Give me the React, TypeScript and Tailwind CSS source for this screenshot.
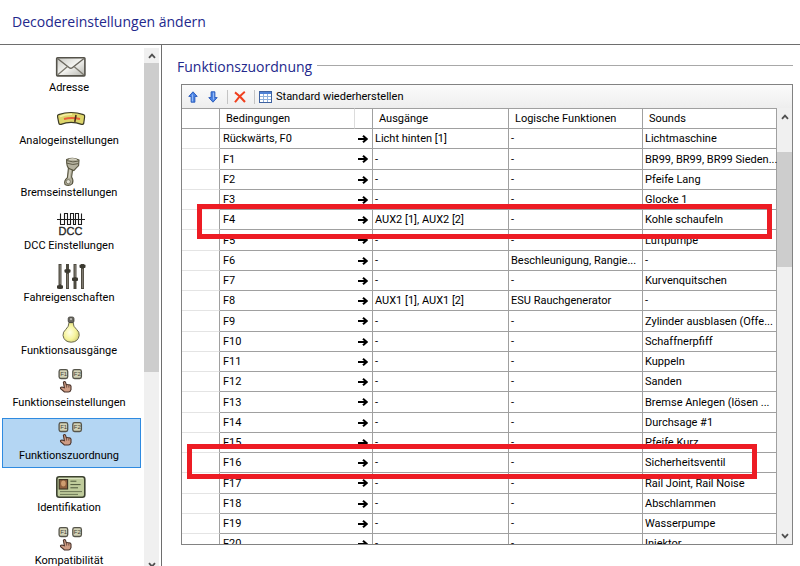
import React from 'react';
import clsx from 'clsx';

interface MappingRow {
  condition: string;
  outputs: string;
  logic: string;
  sounds: string;
}

const row = (condition: string, sounds: string, outputs = '-', logic = '-'): MappingRow => ({
  condition,
  outputs,
  logic,
  sounds,
});

const rows: MappingRow[] = [
  row('Rückwärts, F0', 'Lichtmaschine', 'Licht hinten [1]'),
  row('F1', 'BR99, BR99, BR99 Sieden...'),
  row('F2', 'Pfeife Lang'),
  row('F3', 'Glocke 1'),
  row('F4', 'Kohle schaufeln', 'AUX2 [1], AUX2 [2]'),
  row('F5', 'Luftpumpe'),
  row('F6', '-', '-', 'Beschleunigung, Rangie...'),
  row('F7', 'Kurvenquitschen'),
  row('F8', '-', 'AUX1 [1], AUX1 [2]', 'ESU Rauchgenerator'),
  row('F9', 'Zylinder ausblasen (Offe...'),
  row('F10', 'Schaffnerpfiff'),
  row('F11', 'Kuppeln'),
  row('F12', 'Sanden'),
  row('F13', 'Bremse Anlegen (lösen ...'),
  row('F14', 'Durchsage #1'),
  row('F15', 'Pfeife Kurz'),
  row('F16', 'Sicherheitsventil'),
  row('F17', 'Rail Joint, Rail Noise'),
  row('F18', 'Abschlammen'),
  row('F19', 'Wasserpumpe'),
  row('F20', 'Injektor'),
];

const NavIcon = ({ children }: { children: React.ReactNode }) => (
  <svg viewBox="0 1 34 30" className="h-[30px] w-[34px] shrink-0 overflow-visible" aria-hidden="true">
    {children}
  </svg>
);

const EnvelopeIcon = () => (
  <NavIcon>
    <defs>
      <linearGradient id="paper" x1="0" y1="0" x2="1" y2="1">
        <stop offset="0" stopColor="#c9c9c3" />
        <stop offset="0.5" stopColor="#f4f4f1" />
        <stop offset="1" stopColor="#b4b4ad" />
      </linearGradient>
    </defs>
    <rect x="4.7" y="7.7" width="28.2" height="18.2" rx="0.8" fill="url(#paper)" stroke="#54524a" strokeWidth="1.6" />
    <path d="M5.5 8.5 L17 17.5 Q18.8 19 20.6 17.5 L32 8.5" fill="none" stroke="#6a675e" strokeWidth="1.4" />
    <path d="M5.5 25 L15.5 16.4 M32 25 L22 16.4" stroke="#7d7a70" strokeWidth="1.3" />
  </NavIcon>
);

const GaugeIcon = () => (
  <NavIcon>
    <path
      d="M6.5 11.6 Q19 7.4 31.5 11.6 Q33 12 32.6 14 L31.8 20 Q31.4 21.8 29.6 21.4 Q19 17.4 9 21.4 Q7.2 21.8 6.8 20 L5.6 14 Q5.2 12 6.5 11.6 Z"
      fill="#ddd56a"
      stroke="#3b3a26"
      strokeWidth="1.2"
    />
    <path d="M8 13.4 Q13 11.2 20 11.2" fill="none" stroke="#f4f0a4" strokeWidth="1.6" />
    <path d="M12 16 Q20 14 28 16" fill="none" stroke="#e8603a" strokeWidth="2" />
    <path d="M24 12 L22.8 18.8" stroke="#4c2c1a" strokeWidth="1.6" />
  </NavIcon>
);

const PistonIcon = () => (
  <NavIcon>
    <path
      d="M16.5 12.5 L20.8 13.5 L19.6 22 Q21.8 25 20.4 28.6 Q17 31.6 13 29.4 Q11.6 25.6 15.4 22.6 Z"
      fill="#b3b09e"
      stroke="#57543f"
      strokeWidth="1.1"
    />
    <path d="M18.3 14 L17 23" stroke="#d8d5c3" strokeWidth="1.3" />
    <circle cx="16.3" cy="26.7" r="2.1" fill="#e4e2d5" stroke="#6f6c58" strokeWidth="0.8" />
    <path
      d="M14.6 4.6 Q21 1.6 27 5 L26.6 10.6 Q24 13 21.8 15.6 L17 13.6 Q14.4 11.6 14.6 4.6 Z"
      fill="#b5b29f"
      stroke="#57543f"
      strokeWidth="1.1"
    />
    <path d="M15 5.6 Q21 8 26.6 6 M15 8.2 Q21 10.6 26.4 8.6" fill="none" stroke="#5f5c49" strokeWidth="1" />
    <path d="M17 4.4 Q21 3.2 24.6 4.6" fill="none" stroke="#e0decf" strokeWidth="1.2" />
  </NavIcon>
);

const DccIcon = () => (
  <NavIcon>
    <path
      d="M5 11.5 H33 M8.5 5.5 V16.5 H12.5 V5.5 H15.5 V16.5 H18.5 V5.5 H21.5 V16.5 H23.5 V5.5 H26.5 V16.5 H29.5 V5.5"
      fill="none"
      stroke="#1c1c1c"
      strokeWidth="1.1"
    />
    <text x="6.6" y="27.3" fontSize="11" fill="#222" stroke="#222" strokeWidth="0.3" fontFamily="Liberation Sans, sans-serif">
      DCC
    </text>
  </NavIcon>
);

const SlidersIcon = () => (
  <NavIcon>
    <path d="M8 4 V29 M15.5 4 V29 M23 4 V29 M30.5 4 V29" stroke="#4e4b40" strokeWidth="3" />
    <path d="M8.2 5 V24 M15.7 14 V28 M23.2 5 V17 M30.7 9 V28" stroke="#99968a" strokeWidth="0.8" />
    <g fill="#3b3930">
      <rect x="5" y="25.2" width="6" height="3.6" rx="1" />
      <rect x="12.5" y="9.2" width="6" height="3.6" rx="1" />
      <rect x="20" y="17.4" width="6" height="3.6" rx="1" />
      <rect x="27.5" y="4.4" width="6" height="3.6" rx="1" />
    </g>
  </NavIcon>
);

const BulbIcon = () => (
  <NavIcon>
    <defs>
      <radialGradient id="glow" cx="0.42" cy="0.5" r="0.6">
        <stop offset="0" stopColor="#ffffe6" />
        <stop offset="0.6" stopColor="#f6f49c" />
        <stop offset="1" stopColor="#d3cf78" />
      </radialGradient>
    </defs>
    <path
      d="M17 9.5 H21.2 Q21 13.6 24.6 16.4 Q27.6 19 27.2 22.4 Q26.2 29 19.2 29.2 Q12 29 11 22.4 Q10.8 19 13.8 16.4 Q17 13.6 17 9.5 Z"
      fill="url(#glow)"
      stroke="#6b6a50"
      strokeWidth="1"
    />
    <rect x="16.2" y="4" width="5.8" height="5.6" rx="1.6" fill="#66655d" stroke="#3f3e38" strokeWidth="0.8" />
    <circle cx="19" cy="6.2" r="1.1" fill="#b9b8b2" />
  </NavIcon>
);

const KeysIcon = () => (
  <NavIcon>
    <g fill="#d3d2b6" stroke="#55544a" strokeWidth="1.3">
      <rect x="7.1" y="4.7" width="8.6" height="8.8" rx="1.8" />
      <rect x="20.8" y="4.7" width="8.6" height="8.8" rx="1.8" />
    </g>
    <g fontSize="6" fill="#44433a" fontFamily="Liberation Sans, sans-serif">
      <text x="8.2" y="11.3">F1</text>
      <text x="21.8" y="11.3">F2</text>
    </g>
    <path
      d="M11.4 17.4 Q12.4 15.8 13.5 17.2 L14.4 20 Q16 19 16.8 20 Q18.6 19.6 19 21.2 V24.6 Q18.4 27 16.4 27 H12.4 L8.6 23.6 Q8 22 10 22 L12.4 22.8 Z"
      fill="#cf9c84"
      stroke="#4a332a"
      strokeWidth="1.1"
    />
    <path d="M14.6 20.4 V22.6 M16.8 20.4 V22.6" stroke="#5f4135" strokeWidth="0.8" />
  </NavIcon>
);

const IdCardIcon = () => (
  <NavIcon>
    <rect x="4.8" y="6.8" width="28" height="20.4" rx="2.4" fill="#bfcb9b" stroke="#3d4231" strokeWidth="1.6" />
    <path d="M6.4 8.4 H31.2" stroke="#dde6c2" strokeWidth="1" />
    <rect x="7.2" y="9.6" width="8.4" height="9.4" fill="#8e5f3e" stroke="#3c3325" strokeWidth="1.1" />
    <ellipse cx="11.4" cy="13.6" rx="2.3" ry="3" fill="#cf9d70" />
    <path d="M18.4 11.2 H24.4 M18.4 14.6 H28.6 M18.4 17.8 H26" stroke="#4c5539" strokeWidth="1" />
    <path d="M8 21.6 H30 M8 24.4 H26" stroke="#6d7755" strokeWidth="1" />
  </NavIcon>
);

const navItems = [
  { label: 'Adresse', Icon: EnvelopeIcon },
  { label: 'Analogeinstellungen', Icon: GaugeIcon },
  { label: 'Bremseinstellungen', Icon: PistonIcon },
  { label: 'DCC Einstellungen', Icon: DccIcon },
  { label: 'Fahreigenschaften', Icon: SlidersIcon },
  { label: 'Funktionsausgänge', Icon: BulbIcon },
  { label: 'Funktionseinstellungen', Icon: KeysIcon },
  { label: 'Funktionszuordnung', Icon: KeysIcon, active: true },
  { label: 'Identifikation', Icon: IdCardIcon },
  { label: 'Kompatibilität', Icon: KeysIcon },
];

const Chevron = ({ down = false }: { down?: boolean }) => (
  <svg viewBox="0 0 8 8" className={clsx('size-2 shrink-0', down && 'rotate-180')} aria-hidden="true">
    <path d="M1 5.8 L4 2.6 L7 5.8" fill="none" stroke="#505050" strokeWidth="1.8" />
  </svg>
);

const BlueArrow = ({ down = false }: { down?: boolean }) => (
  <svg viewBox="0 0 10 12" className={clsx('h-3 w-2.5', down && 'rotate-180')} aria-hidden="true">
    <path d="M5 0.8 L9.2 5.4 H6.9 V11.2 H3.1 V5.4 H0.8 Z" fill="#4c84e4" stroke="#2456b8" strokeWidth="0.9" />
    <path d="M4.4 3.4 V10.4" stroke="#9cc2fa" strokeWidth="1" />
  </svg>
);

const RowArrow = () => (
  <svg viewBox="0 0 10 8" className="ml-[3px] h-2 w-2.5" role="img" aria-label="führt zu">
    <path d="M0 4 H8.6 M5 0.8 L8.8 4 L5 7.2" fill="none" stroke="#000" strokeWidth="2.1" />
  </svg>
);

const Sidebar = () => (
  <aside className="flex w-[162px] shrink-0 overflow-hidden border-r border-[#6e6e6e]">
    <nav className="min-w-0 flex-1 pt-[5px] pl-0.5">
      <ul>
        {navItems.map(({ label, Icon, active }) => (
          <li key={label} className="h-[52px] odd:h-[53px]">
            <button
              type="button"
              aria-current={active ? 'page' : undefined}
              className={clsx(
                'flex h-[50px] w-full flex-col items-center border pr-[5px]',
                active ? 'border-[#2e8ae0] bg-[#b4d6f3]' : 'border-transparent',
              )}
            >
              <Icon />
              <span className="leading-[14px] whitespace-nowrap">{label}</span>
            </button>
          </li>
        ))}
      </ul>
    </nav>
    <div className="mt-[3px] mr-0.5 ml-[3px] flex w-[15px] flex-col bg-[#f0f0f0]">
      <button type="button" aria-label="Nach oben" className="flex h-[15px] shrink-0 items-center justify-center">
        <Chevron />
      </button>
      <div className="h-[309px] shrink-0 bg-[#cdcdcd]" />
      <div className="flex-1" />
      <button type="button" aria-label="Nach unten" className="flex h-[5px] shrink-0 items-start justify-center overflow-hidden">
        <Chevron down />
      </button>
    </div>
  </aside>
);

const Toolbar = () => (
  <div className="flex h-[23px] shrink-0 items-center bg-linear-to-b from-[#fbfbfb] to-[#eeeeee] pl-1.5">
    <button type="button" aria-label="Nach oben verschieben">
      <BlueArrow />
    </button>
    <button type="button" aria-label="Nach unten verschieben" className="ml-2.5">
      <BlueArrow down />
    </button>
    <span className="ml-[9px] h-3.5 w-px bg-[#c4c4c4]" />
    <button type="button" aria-label="Löschen" className="ml-1.5">
      <svg viewBox="0 0 12 12" className="size-3" aria-hidden="true">
        <path d="M1 1.4 Q6 5 11 11 M10.8 0.8 Q5 5.4 1 11.2" fill="none" stroke="#f0401f" strokeWidth="2" />
      </svg>
    </button>
    <span className="ml-2 h-3.5 w-px bg-[#c4c4c4]" />
    <button type="button" className="ml-1 flex items-center gap-1">
      <svg viewBox="0 0 13 12" className="h-3 w-[13px]" aria-hidden="true">
        <rect x="0.5" y="0.5" width="12" height="11" fill="#fff" stroke="#3f62a0" />
        <rect x="1" y="1" width="11" height="2" fill="#4f82d6" />
        <path d="M1 5.5 H12 M1 8.5 H12 M4.5 3 V11 M8.5 3 V11" stroke="#8fb0dc" strokeWidth="1" />
      </svg>
      <span>Standard wiederherstellen</span>
    </button>
  </div>
);

const headCell = 'border-r border-y border-[#a0a0a0] pt-px pb-0 pl-1.5 text-left font-normal';
const bodyCell = 'border-r border-b border-[#a0a0a0] pt-px pb-0 pl-0.5';

const MappingTable = () => (
  <table className="w-full table-fixed border-separate border-spacing-0 whitespace-nowrap">
    <colgroup>
      <col className="w-[38px]" />
      <col className="w-[135px]" />
      <col className="w-[18px]" />
      <col className="w-[136px]" />
      <col className="w-[134px]" />
      <col />
    </colgroup>
    <thead>
      <tr className="h-[21px]">
        <th className="border-r border-y border-[#a0a0a0] p-0" />
        <th className="border-r border-y border-y-[#a0a0a0] border-r-[#dcdcdc] pt-px pb-0 pl-1.5 text-left font-normal">
          Bedingungen
        </th>
        <th className="border-r border-y border-[#a0a0a0] p-0" />
        <th className={headCell}>Ausgänge</th>
        <th className={headCell}>Logische Funktionen</th>
        <th className={headCell}>Sounds</th>
      </tr>
    </thead>
    <tbody>
      {rows.map((r) => (
        <tr key={r.condition} className="h-[20px] nth-[4n+2]:h-[21px]">
          <td className="border-r border-b border-r-[#a0a0a0] border-b-[#e4e4e4] p-0" />
          <td className="border-b border-[#a0a0a0] pt-px pb-0 pl-[3px]">{r.condition}</td>
          <td className="border-r border-b border-[#a0a0a0] p-0">
            <RowArrow />
          </td>
          <td className={bodyCell}>{r.outputs}</td>
          <td className={bodyCell}>{r.logic}</td>
          <td className={bodyCell}>{r.sounds}</td>
        </tr>
      ))}
    </tbody>
  </table>
);

export default function App() {
  return (
    <div className="flex h-screen flex-col overflow-hidden bg-white font-['Roboto','Noto_Sans',sans-serif] text-[11px] leading-[14px] text-black">
      <header className="flex h-[45px] shrink-0 items-center border-b border-[#6e6e6e] pl-3">
        <h1 className="font-['Open_Sans',sans-serif] text-[14px] leading-5 text-[#23288c]">
          Decodereinstellungen ändern
        </h1>
      </header>
      <div className="flex min-h-0 flex-1">
        <Sidebar />
        <main className="flex min-w-0 flex-1 flex-col pt-3 pr-[7px] pb-[21px] pl-[15px]">
          <div className="flex items-center gap-[5px]">
            <h2 className="font-['Open_Sans',sans-serif] text-[14px] leading-5 text-[#23288c]">Funktionszuordnung</h2>
            <div className="mb-[3px] h-px flex-1 bg-[#a8a8a8]" />
          </div>
          <section className="relative mt-[7px] ml-1 flex min-h-0 flex-1 flex-col border border-[#828282]">
            <Toolbar />
            <div className="flex min-h-0 flex-1">
              <div className="min-w-0 flex-1 overflow-hidden">
                <MappingTable />
              </div>
              <div className="flex w-[15px] flex-col bg-[#f0f0f0]">
                <button type="button" aria-label="Tabelle nach oben" className="flex h-[17px] shrink-0 items-center justify-center">
                  <Chevron />
                </button>
                <div className="h-[27px] shrink-0" />
                <div className="h-[115px] shrink-0 bg-[#cdcdcd]" />
                <div className="flex-1" />
                <button type="button" aria-label="Tabelle nach unten" className="flex h-[17px] shrink-0 items-center justify-center">
                  <Chevron down />
                </button>
              </div>
            </div>
            {/* Hervorgehobene Zeilen F4 und F16 */}
            <div className="pointer-events-none absolute top-[119px] right-[20px] left-[15px] h-[35px] border-[5px] border-[#ed1c24]" />
            <div className="pointer-events-none absolute top-[359px] right-[35px] left-[5px] h-[35px] border-[5px] border-[#ed1c24]" />
          </section>
        </main>
      </div>
    </div>
  );
}
